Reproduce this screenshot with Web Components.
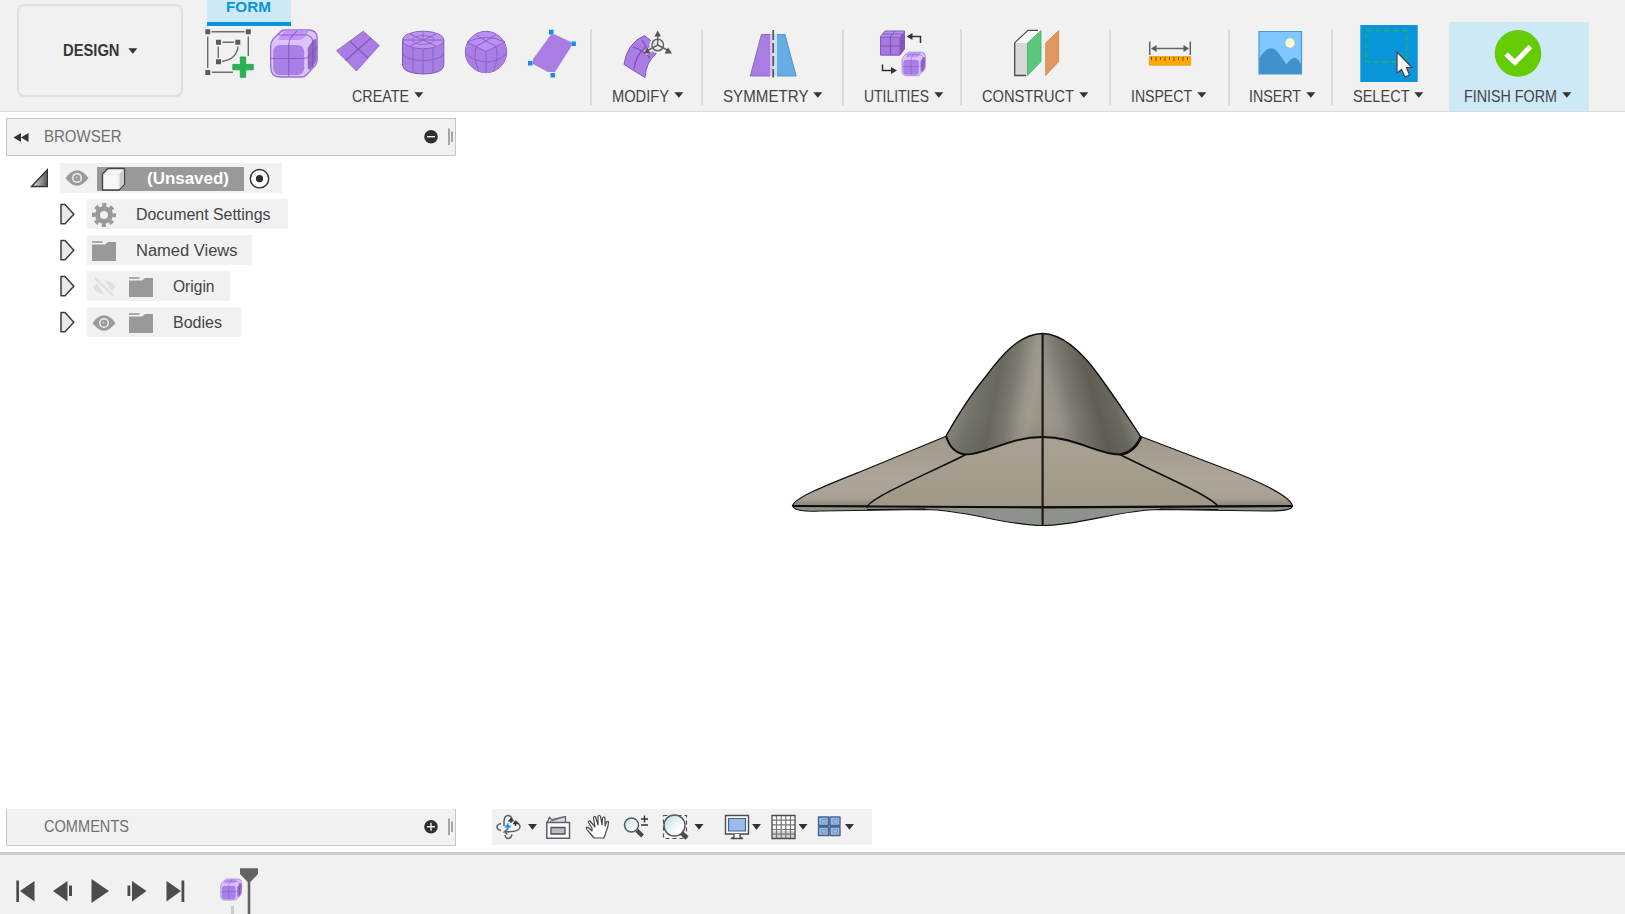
<!DOCTYPE html>
<html lang="en">
<head>
<meta charset="utf-8">
<title>Form design workspace</title>
<style>
html,body{margin:0;height:100%;overflow:hidden;background:#fff;font-family:"Liberation Sans",Arial,sans-serif}
</style>
</head>
<body>
<form-workspace></form-workspace>
<script>
const define = (name, css, html) => customElements.define(name, class extends HTMLElement {
  constructor() {
    super();
    this.attachShadow({mode: "open"});
  }
  connectedCallback() {
    const t = document.createElement("template");
    t.innerHTML = `<style>*{box-sizing:border-box}svg{display:block;flex:none}${css}</style>` + (typeof html === "function" ? html(this) : html);
    this.shadowRoot.replaceChildren(t.content.cloneNode(true));
  }
});

/* One line of text, set to a given width. */
define("fit-text", `:host{display:block;flex:none}text{fill:currentColor;font-family:"Liberation Sans",Arial,sans-serif}`, el => {
  const w = el.getAttribute("w"), s = el.getAttribute("size") || 16.5, b = el.getAttribute("weight") || 400;
  return `<svg width="${w}" height="20" overflow="visible"><text x="0" y="15" font-size="${s}" font-weight="${b}" textLength="${w}" lengthAdjust="spacingAndGlyphs">${el.getAttribute("text")}</text></svg>`;
});

define("drop-arrow", `:host{display:block;flex:none}`, `<svg width="10" height="6"><path d="M.3.2h9L4.8 5.8z" fill="#333"/></svg>`);

/* Toolbar group: drawing above, label and arrow below. */
define("tool-group", `
:host{display:flex;flex-direction:column;flex:none;height:111px;padding-top:22px;position:relative;color:#444}
:host([active]){background:linear-gradient(#cde9f5,#cde9f5) 0 22px/100% 89px no-repeat}
:host([sep]){background:linear-gradient(#dadada,#dadada) right 29px/2px 76px no-repeat}
.label{display:flex;align-items:center;gap:5px;height:20px;margin-top:3px;margin-left:-.7px}
drop-arrow{margin-top:-4px}`,
el => {
  const x = +el.getAttribute("x"), w = +el.getAttribute("w"), lx = +el.getAttribute("lx");
  return `<style>:host{width:${w}px}.label{padding-left:${lx - x}px}</style>
  <svg width="${w}" height="62" viewBox="${x} 22 ${w} 62">${ICONS[el.getAttribute("icon")]}</svg>
  <div class="label"><fit-text w="${el.getAttribute("lw")}" text="${el.getAttribute("label")}"></fit-text><drop-arrow></drop-arrow></div>`;
});

const roundedBox = `<path d="M1.500 17Q1.500 13 4 10L10 4Q12.500 1 16 1H40Q48 1.500 48 9V31Q48 34 45.500 37L38 45Q35.500 48 32 48H11Q1.500 48 1.500 38Z" fill="#dcc4fa" stroke="#9970cc" stroke-width="1.300"/>
<path d="M9.500 9L14 3.500Q16 1.600 19 1.600H38Q40 2 38.500 4L35 8.500Q33 11 29 11H12Q8 11 9.500 9Z" fill="#c096fa"/>
<path d="M38.500 19L44 11Q47.400 8 47.400 13V30Q47 33 45 35.500L41.500 40Q38.500 42 38.500 37Z" fill="#9266cb"/>
<rect x="4" y="16" width="31" height="30" rx="6.500" fill="#a97fe8"/>
<path d="M19.500 47.500V17Q19.500 11 23 7L28 1.500M2 29.500H34Q38 29.500 40 27L48 18M9 6H37Q43.500 7 43.500 13V38" fill="none" stroke="#7d50b3" stroke-opacity=".75" stroke-width="1.100"/>`;

const ICONS = {
create: `
<g fill="none" stroke="#6c6c6c" stroke-width="1.400"><path d="M211.500 31.700H244.500M207.700 36.500V68M212 72.300H233M248.300 36.500V56M222.500 42.300H234M218.300 46.500V58M222 61.500Q237 59 238 46.500"/></g>
<g fill="#5b5b5b"><path d="M205.300 29.300h5v5h-5zM245.800 29.300h5v5h-5zM205.300 70h5v5h-5zM216 39.700h5v5h-5zM235.300 39.700h5v5h-5zM216 59.300h5v5h-5z"/></g>
<path d="M240.300 56.900h5.400v7.500h7.600v5.400h-7.600v7.500h-5.400v-7.500h-7.500v-5.400h7.500z" fill="#2bb255" stroke="#1fa049" stroke-width=".8"/>
<g transform="translate(269.200 29)">${roundedBox}</g>
<path d="M336.500 50.700L363.300 31.200L379.300 45.500L356.500 71Z" fill="#a97de4" stroke="#8a5fbf" stroke-width=".8"/>
<path d="M345.500 60.500L371 38M350 41.500L368 58" stroke="#8458b9" stroke-width="1.200"/>
<path d="M402.500 40V65Q403 73.500 423.500 74Q443.500 73.500 443.800 65V40Z" fill="#a77ee2" stroke="#8359b7"/>
<ellipse cx="423.200" cy="40" rx="20.600" ry="8.800" fill="#bc92f5" stroke="#8d63c2"/>
<ellipse cx="423.200" cy="40" rx="11" ry="4.500" fill="none" stroke="#8d63c2" stroke-width=".8"/>
<path d="M402.500 53Q404 60 423.500 60.500Q442 60 443.800 53M413 48V73M423 49V74M433 48V73M423 31V40M403 40H443M410 34L436 46M436 34L410 46" fill="none" stroke="#845ab8" stroke-width=".8"/>
<circle cx="486" cy="52" r="20.700" fill="#b98ff5" stroke="#9065c5" stroke-width="1"/>
<path d="M486 51.500L467 42Q463 60 474 69Q486 77 498 69Q509 60 505 42Z" fill="#a97fe5"/>
<path d="M486 51.500L467 42M486 51.500L505 42M486 51.500V72.500M467 42Q486 33 505 42M476 35L496 46.500M496 35L476 46.500M476 46.500Q473 60 479 72M496 46.500Q499 60 493 72M466 54Q476 62 486 62Q497 62 506 54" fill="none" stroke="#875dbc" stroke-width=".9"/>
<path d="M551 34.500H555L571 42V47L555 72H548L533 64V59Z" fill="#a97de4"/>
<g fill="#168deb"><path d="M549 29.800h4.600v4.600H549zM571.300 41.500h4.600v4.600h-4.600zM528 61h4.600v4.600H528zM550.500 73h4.600v4.600h-4.600z"/></g>`,
modify: `
<path d="M624 64.500Q627 43 644.500 35.500L656 45V54Q646 62 645 77.500Z" fill="#a97de4" stroke="#8055b4"/>
<path d="M633 47Q643 50 650 58M642 40L646 47Q636 54 634 69" fill="none" stroke="#7b50ae" stroke-width="1.200"/>
<g stroke="#f1f1f1" stroke-width="4.500" fill="none"><path d="M657.700 35V45L645 53M657.700 45L670 52"/><circle cx="657.700" cy="45" r="6"/></g>
<g stroke="#646464" stroke-width="1.500" fill="none"><path d="M657.700 34V45L646 51.500M657.700 45L670 51.500"/><circle cx="657.700" cy="45" r="5.800"/></g>
<path d="M657.700 30.500L661 36.500H654.500ZM643.500 53.500L650.500 53.500L647.500 47.500ZM672 53.500L664.500 53.500L668 47.500Z" fill="#555"/>`,
symmetry: `
<path d="M761.500 34H770.500V76H750.300Z" fill="#a97de4"/><path d="M770 76H750.300L761.500 34.500H770" fill="none" stroke="#9268c6"/>
<path d="M777 34H785L796.500 76H777Z" fill="#67ade3"/><path d="M777 76H796L785 34.500H777" fill="none" stroke="#5698ce"/>
<path d="M770.500 34h3v42h-3z" fill="#dccbed"/><path d="M773.500 34h3.500v42h-3.500z" fill="#cbdff0"/><path d="M773.200 30V77.500" stroke="#5b5b5b" stroke-width="1.800" stroke-dasharray="10 3"/>`,
utilities: `
<path d="M880.500 36.500L885 31H904.500V49L900 55H880.500Z" fill="#ba91f0" stroke="#8359b8"/>
<path d="M880.500 37H900V55H880.500Z" fill="#a778e4" stroke="#8056b4" stroke-width=".8"/><path d="M900 37L904.500 31V49L900 55Z" fill="#865bba"/>
<path d="M890.500 37V55M880.500 46H900L904.500 40M890.500 37L895 31M882.500 34H902V52" fill="none" stroke="#7b50ae" stroke-width=".9"/>
<g transform="translate(901.300 51.700) scale(.5)">${roundedBox}</g>
<path d="M911 36.500H920.500V43M882.500 64.500V70.500H891" fill="none" stroke="#333" stroke-width="1.500"/><path d="M906.700 36.500L912.500 33V40ZM897 70.500L891 67V74Z" fill="#333"/>`,
construct: `
<path d="M1014.500 43L1028 30H1041L1027.500 43Z" fill="#fff"/><path d="M1015 43H1027V76H1015Z" fill="#d8d8d8"/>
<path d="M1038 30.300H1028L1014.700 43V75.500H1026" fill="none" stroke="#4b4b4b" stroke-width="1.300"/>
<path d="M1015.500 43H1027L1040 30.900H1028.500Z" fill="#fafafa"/>
<path d="M1027.500 43L1041 30.500V61.500L1027.500 75.500Z" fill="#5bc77d" stroke="#41ae64" stroke-width=".8"/>
<path d="M1045.700 43L1058.700 30.500V61.500L1045.700 75.500Z" fill="#e29761" stroke="#cf8149" stroke-width=".8"/>`,
inspect: `
<path d="M1149.700 41.500V55M1190.300 41.500V55M1154 48.500H1186" stroke="#666" stroke-width="1.500"/><path d="M1151 48.500L1156.500 45V52ZM1189 48.500L1183.500 45V52Z" fill="#5b5b5b"/>
<path d="M1149.300 56.500H1190.700V65.300H1149.300Z" fill="#ffa800" stroke="#e99900" stroke-width=".7"/>
<path d="M1151.500 57V60M1156 57V61M1160.500 57V60M1165 57V61M1169.500 57V60M1174 57V61M1178.500 57V60M1183 57V61M1187.500 57V60" stroke="#76530b" stroke-width="1"/>`,
insert: `
<path d="M1259 31.500H1301.500V74H1259Z" fill="#81c7ff"/><circle cx="1290" cy="43" r="4.700" fill="#fffccb"/>
<path d="M1259 59C1266 47 1273 45 1278.500 53L1286.500 64.500Q1294 53 1299 61L1301.500 65V74H1259Z" fill="#4092cc"/>
<path d="M1259 31.500H1301.500V74H1259Z" fill="none" stroke="#479bd3" stroke-width="1.200"/>`,
select: `
<path d="M1360.300 25H1417.700V82H1360.300Z" fill="#0895da"/>
<path d="M1366 30.500H1406.500V62H1366Z" fill="none" stroke="#24b064" stroke-width="1.500" stroke-dasharray="6 3"/>
<path d="M1397 52V73L1401.500 69.500L1405 77L1409.500 75L1406.500 67.500H1412Z" fill="#f6f6f6" stroke="#444" stroke-width="1.200"/>`,
finish: `
<circle cx="1518" cy="53.400" r="23.300" fill="#65cc03"/><path d="M1506 54L1515 62.500L1530.500 46.500" fill="none" stroke="#fff" stroke-width="5"/>`
};

define("design-button", `
:host{display:block;flex:none;width:205px;padding:4px 0 0 17px}
div{width:165.500px;height:93px;border:2px solid #dedede;border-radius:7px;display:flex;align-items:center;padding-left:44px;gap:8px;color:#373737}
fit-text{margin-top:1px}drop-arrow{margin-top:0}`,
`<div><fit-text w="56.500" weight="700" size="16" text="DESIGN"></fit-text><drop-arrow></drop-arrow></div>`);

define("form-tab", `
:host{display:block;position:absolute;left:207px;top:0;width:83.500px;height:25.500px;background:#cde9f5;border-bottom:4.500px solid #0895da;color:#0895da;padding-left:18.500px}
fit-text{margin-top:-3.500px}`, `<fit-text w="45" weight="700" size="15.500" text="FORM"></fit-text>`);

define("tool-bar", `:host{display:flex;height:112px;background:#f1f1f1;border-bottom:1.500px solid #dcdcdc;position:relative}`, `
<design-button></design-button>
<tool-group sep icon="create" x="205" w="387" lx="353" lw="57" label="CREATE"></tool-group>
<tool-group sep icon="modify" x="592" w="111" lx="612.500" lw="57" label="MODIFY"></tool-group>
<tool-group sep icon="symmetry" x="703" w="141" lx="723.500" lw="85.500" label="SYMMETRY"></tool-group>
<tool-group sep icon="utilities" x="844" w="118" lx="864.500" lw="65" label="UTILITIES"></tool-group>
<tool-group sep icon="construct" x="962" w="149" lx="983" lw="92" label="CONSTRUCT"></tool-group>
<tool-group sep icon="inspect" x="1111" w="119" lx="1131.500" lw="61" label="INSPECT"></tool-group>
<tool-group sep icon="insert" x="1230" w="103" lx="1250" lw="52" label="INSERT"></tool-group>
<tool-group icon="select" x="1333" w="116" lx="1353.500" lw="56.500" label="SELECT"></tool-group>
<tool-group active icon="finish" x="1449" w="139.500" lx="1464.500" lw="93" label="FINISH FORM"></tool-group>
<form-tab></form-tab>`);

define("panel-bar", `
:host{display:flex;align-items:center;width:450px;height:37.500px;background:#f1f1f1;border:1.500px solid #c6c6c6;color:#707070}
:host([open-top]){border-top:0}
.lead{width:37px}.grow{flex:1}`, el => `
<svg class="lead" width="37" height="20"><path d="${el.hasAttribute("open-top") ? "" : "M6.500 10.500L14 6V15ZM14 10.500L21.500 6V15Z"}" fill="#333"/></svg>
<fit-text w="${el.getAttribute("tw")}" text="${el.getAttribute("text")}"></fit-text><span class="grow"></span>
<svg width="31" height="22"><circle cx="7" cy="10.700" r="6.800" fill="#2f2f2f"/><path d="${el.hasAttribute("open-top") ? "M3 10.700H11M7 6.700V14.700" : "M3 10.700H11"}" stroke="#eee" stroke-width="1.400"/><path d="M25 2.500V19M28 5.500V16" stroke="#858585" stroke-width="1.400"/></svg>`);

const EYE = `<path d="M.5 10Q12 -5.500 23.500 10Q12 25.500 .5 10Z" fill="#9b9b9b"/><circle cx="12" cy="10" r="5" fill="#eee"/><circle cx="12" cy="10" r="3.500" fill="#9b9b9b"/><circle cx="11.500" cy="9.500" r="1" fill="#ccc"/>`;
const GLYPHS = {
eye: EYE,
hidden: `<path d="M1 10L5 6L12 17Q4 17 1 10ZM12 3Q20 4 23.500 10L20 14Z" fill="#dfdfdf"/><circle cx="12.500" cy="10" r="4" fill="#f1f1f1"/><path d="M3 1L21 19" stroke="#f1f1f1" stroke-width="5"/><path d="M3 1L21.500 19" stroke="#dfdfdf" stroke-width="2.300"/>`,
folder: `<path d="M0 3.500H13L16 1H24V20H0Z" fill="#999"/><path d="M0 0H10.500V2H0Z" fill="#aaa"/>`,
gear: `<circle cx="12" cy="10" r="6.500" fill="none" stroke="#999" stroke-width="5"/><circle cx="12" cy="10" r="10.200" fill="none" stroke="#999" stroke-width="3.500" stroke-dasharray="4.200 3.811" stroke-dashoffset="2.100"/>`
};

/* Row of the model tree: arrow, one or two glyphs, a caption. */
define("tree-row", `
:host{display:flex;align-items:center;height:30px;padding-left:54px;color:#444}
.cell{display:flex;align-items:center;height:30px;background:#f1f1f1;margin-left:12px;padding-left:4.500px}
.cell svg{position:relative;top:.5px}
.cell svg + svg{margin-left:13.200px}fit-text{margin-left:20.700px;margin-top:2px}`, el => {
  const g = el.getAttribute("glyphs").split(" ");
  return `<style>.cell{width:${el.getAttribute("w")}px}</style><svg width="15" height="22"><path d="M1 1.500H5L13.800 11.300L5 20.800H1Z" fill="#e9e9ed" stroke="#3d3d3d" stroke-width="1.500" stroke-linejoin="round"/></svg>
  <div class="cell">${g.map(n => `<svg width="24" height="20" overflow="visible">${GLYPHS[n]}</svg>`).join("")}<fit-text w="${el.getAttribute("tw")}" size="16" text="${el.getAttribute("text")}"></fit-text></div>`;
});

define("tree-root", `
:host{display:flex;align-items:center;height:30px;padding-left:24px}
.cell{display:flex;align-items:center;width:222px;height:30px;background:#f1f1f1;margin-left:12px;padding-left:4.500px}
.name{display:flex;align-items:center;width:147px;height:24px;background:#999;margin:1px 5px 0 8.500px;padding-left:4px;color:#fff}
fit-text{margin-left:21px;margin-top:1px}`, `
<svg width="18" height="20"><defs><linearGradient id="g"><stop stop-color="#eee"/><stop offset="1" stop-color="#555"/></linearGradient></defs><path d="M1.500 18.500L17.500 1.500V18.500Z" fill="url(#g)" stroke="#333" stroke-width="1.300"/></svg>
<div class="cell"><svg width="24" height="20">${EYE}</svg>
<div class="name"><svg width="25" height="24"><path d="M1.500 7L7 1.500H23.500V17L18 23H1.500Z" fill="#f7f7f8" stroke="#444" stroke-width="1.400" stroke-linejoin="round"/><path d="M18.500 7L23 2V17L18.500 22Z" fill="#c9cbd0"/><path d="M2.500 7.500H18V22" fill="none" stroke="#e3e4e8"/></svg><fit-text w="82" weight="700" size="16" text="(Unsaved)"></fit-text></div>
<svg width="21" height="22"><circle cx="10.500" cy="11.700" r="9.200" fill="#fafafa" stroke="#333" stroke-width="1.400"/><circle cx="10.500" cy="11.700" r="3.600" fill="#2d2d2d"/></svg></div>`);

define("side-panels", `
:host{display:flex;flex-direction:column;justify-content:space-between;width:456px;padding:6px 0 6px 6px}
.tree{display:flex;flex-direction:column;gap:6px;margin-top:7.500px}`, `
<div><panel-bar text="BROWSER" tw="77.500"></panel-bar>
<div class="tree"><tree-root></tree-root>
<tree-row glyphs="gear" text="Document Settings" w="201" tw="134.500"></tree-row>
<tree-row glyphs="folder" text="Named Views" w="165" tw="101.500"></tree-row>
<tree-row glyphs="hidden folder" text="Origin" w="142.500" tw="41.500"></tree-row>
<tree-row glyphs="eye folder" text="Bodies" w="154" tw="49"></tree-row></div></div>
<panel-bar open-top text="COMMENTS" tw="85"></panel-bar>`);

define("model-view", `:host{display:block}`, `
<svg width="1169" height="697" viewBox="456 112 1169 697">
<defs>
<linearGradient id="dl" gradientUnits="userSpaceOnUse" x1="962" y1="386" x2="1042" y2="402"><stop stop-color="#87847a"/><stop offset=".15" stop-color="#77746a"/><stop offset=".42" stop-color="#6a675c"/><stop offset=".62" stop-color="#7d7a70"/><stop offset=".78" stop-color="#999488"/><stop offset=".88" stop-color="#a19b8e"/><stop offset="1" stop-color="#9b9386"/></linearGradient>
<linearGradient id="dr" gradientUnits="userSpaceOnUse" x1="1042" y1="396" x2="1122" y2="374"><stop stop-color="#a0998b"/><stop offset=".14" stop-color="#959187"/><stop offset=".32" stop-color="#7c796f"/><stop offset=".6" stop-color="#615d53"/><stop offset=".82" stop-color="#6b685e"/><stop offset="1" stop-color="#88857b"/></linearGradient>
<linearGradient id="wg" x1="0" y1="0" x2="0" y2="1"><stop stop-color="#a09889"/><stop offset=".6" stop-color="#ada698"/><stop offset=".88" stop-color="#a9a294"/><stop offset="1" stop-color="#8a8478"/></linearGradient>
<linearGradient id="mg" x1="0" y1="0" x2="0" y2="1"><stop stop-color="#a9a294"/><stop offset="1" stop-color="#a09786"/></linearGradient>
<linearGradient id="sh" x1="0" y1="0" x2="0" y2="1"><stop offset=".7" stop-color="#555" stop-opacity="0"/><stop offset="1" stop-color="#555" stop-opacity=".25"/></linearGradient>
</defs>
<path d="M792.500 505.500Q794 512.500 820 511L925 509.500C968 510 1005 525.500 1042.500 525.500C1080 525.500 1118 510 1160 509.500L1265 511Q1293 511.500 1292.500 505.500Z" fill="#8e928c" stroke="#111" stroke-width="1.100"/>
<path d="M946 436.300L867 469C832 483 793.500 497.500 792.500 506L1292.500 506C1291 496.500 1258 480.500 1222 467.500L1141 436.500Z" fill="url(#wg)" stroke="#111" stroke-width="1.200"/>
<path d="M867 506Q870 500 965 455L1042 437L1121 455Q1213 499 1218 506Z" fill="url(#mg)"/>
<path id="left" d="M946 436C962 408 972 393 985 377.500C1003 353 1020 334 1042.500 333.500V437C1008 437 986 455 965 454.500C955 453 949 446 946 436Z" fill="url(#dl)"/>
<path id="right" d="M1141 437C1124 411 1116 399 1100 377C1083 353 1063 334 1042.500 333.500V437C1076 437 1098 455 1120 454.500C1131 453 1137 446 1141 437Z" fill="url(#dr)"/>
<use href="#left" style="display:none"/>
<path d="M946 436L1042.500 333.500L1141 437C1137 446 1131 453 1120 454.500C1098 455 1076 437 1042.500 437C1008 437 986 455 965 454.500C955 453 949 446 946 436Z" fill="url(#sh)"/>
<g fill="none" stroke="#0d0d0b">
<path d="M946 436C962 408 972 393 985 377.500C1003 353 1020 334 1042.500 333.500C1063 334 1083 353 1100 377C1116 399 1124 411 1141 437" stroke-width="1.300"/>
<path d="M946 436C949 446 955 453 965 454.500C986 455 1008 437 1042.500 437C1076 437 1098 455 1120 454.500C1131 453 1137 446 1141 437" stroke-width="2"/>
<path d="M1120 454.500C1131 453 1137 446 1141 437" stroke-width="2.700"/>
<path d="M965 455C925 475 869 498 867 507.500M1121 455C1160 475 1212 496 1218.500 507" stroke-width="1.500"/>
<path d="M792.500 506L1042 507.400L1292.500 506" stroke-width="2.200"/>
<path d="M867 509.500L925 509M1218 509.500L1160 509" stroke-width="1"/>
<path d="M1042.600 333.500V525.500" stroke="#1c1a17" stroke-width="2.200"/></g>
</svg>`);

define("view-tools", `:host{display:flex;width:380px;height:36px;margin-left:36px;background:#f1f1f1}`, `
<svg width="380" height="36" viewBox="492 809 380 36"><defs><linearGradient id="lens" x1="0" y1="0" x2="1" y2="1"><stop stop-color="#b9dcdc"/><stop offset=".7" stop-color="#fff"/></linearGradient></defs>
<g fill="none" stroke="#5c6068" stroke-width="1.500">
<path d="M501 823.500Q497 824.500 497 827Q497 829.500 501 830.500M504 826V821Q504.500 815.500 508 815.500Q511 815.500 512.500 820M514.500 821Q520 823.500 520 827Q519.500 831.500 509 831.700H504.500L507.500 829M504.500 831.700L507.500 834.500M505 835Q505.500 838.500 508 838.500Q511 838.500 512 834.500"/></g>
<path d="M508.500 821.500L511 817.500L513.500 821.500ZM513 824L515.500 820.500L518.500 824Z" fill="#34373d"/><path d="M511 818V823M508.500 820.500H513.500M515.500 821V826M513 823.500H518" stroke="#34373d" stroke-width="1.300"/><path d="M507.700 823.500V829.500M504.700 826.500H510.700" stroke="#168deb" stroke-width="1.800"/>
<g fill="#333"><path d="M528 824H537L532.500 829.700ZM694.500 824H703.500L699 829.700ZM752 824H761L756.500 829.700ZM798.500 824H807.500L803 829.700ZM845 824H854L849.500 829.700Z"/></g>
<path d="M547 823L549.500 817L551.500 819.500L565.500 816.500V823Z" fill="#d9dade" stroke="#5c6068" stroke-width="1.200" stroke-linejoin="round"/><path d="M550 821.500L565 816.500" stroke="#5c6068"/>
<path d="M546.800 822.500H569.500V838.300H546.800Z" fill="#fff" stroke="#5c6068" stroke-width="1.500"/><path d="M551 827.500H565V834H551Z" fill="#babdc5" stroke="#4b4f58" stroke-width="1.300"/>
<path d="M592 831Q587 826 586.500 827.500Q585.500 828.500 589 832L594 838H604L606 832Q608.500 826 608.500 822Q608 820.500 606.500 822L605 826L605 818Q604 815.500 602.500 818L602 825L600.500 816.500Q599 814 598 816.500L598 825L595.500 817Q594 815.500 593.500 818L595 827L590 821Q588 820.500 588.500 822.500L592 828Z" fill="#fff" stroke="#45484f" stroke-width="1.200" stroke-linejoin="round"/>
<circle cx="631.500" cy="825" r="7" fill="url(#lens)" stroke="#565a62" stroke-width="1.500"/><path d="M637 830.500L642.500 836" stroke="#44474e" stroke-width="4"/><path d="M644.500 815.500V822.500M641 819H648M641 825H648" stroke="#333" stroke-width="1.400"/>
<path d="M663.500 815.500H686.500V838.500H663.500Z" fill="none" stroke="#555" stroke-width="1.200" stroke-dasharray="4 3"/><circle cx="674.500" cy="825.500" r="10.500" fill="url(#lens)" stroke="#565a62" stroke-width="1.500"/><path d="M681.500 833L687 838" stroke="#4b4b4b" stroke-width="4.500"/>
<path d="M725.500 815.500H748.500V834H725.500Z" fill="#fff" stroke="#4b4b4b" stroke-width="1.400"/><path d="M728.500 818.500H745.500V831H728.500Z" fill="#9dbbe6" stroke="#3f639b" stroke-width="1.200"/><path d="M734 834V837L731 838.500H743L740 837V834" fill="#fff" stroke="#4b4b4b" stroke-width="1.300"/>
<path d="M772 815.500H795V838.500H772Z" fill="#fff"/><path d="M772 831H795V838.500H772Z" fill="#cfd3dc"/><path d="M776.500 816V838M781.200 816V838M785.800 816V838M790.500 816V838M772 820.200H795M772 824.800H795M772 829.500H795M772 834.200H795" stroke="#777" stroke-width="1.200"/><path d="M772 815.500H795V838.500H772Z" fill="none" stroke="#4b4b4b" stroke-width="1.300"/>
<path d="M818.500 817H828.500V825.500H818.500ZM830 817H840V825.500H830ZM818.500 827H828.500V835.500H818.500ZM830 827H840V835.500H830Z" fill="#9cb9e5" stroke="#47648f" stroke-width="1.400" stroke-linejoin="round"/><path d="M821.500 819.500H826V823H821.500ZM833 819.500H837.500V823H833ZM821.500 829.500H826V833H821.500ZM833 829.500H837.500V833H833Z" fill="none" stroke="#7396c8"/>
</svg>`);

define("time-line", `:host{display:block;height:62px;background:#f1f1f1;border-top:3px solid #cdcdcd}`, `
<svg width="300" height="59" viewBox="0 855 300 59">
<g fill="#4c4c4c"><path d="M16.300 880.500H19V902H16.300ZM20 891L34.500 881V901.500ZM53 891L67.500 881V901.500ZM69 885.500H72V896H69ZM91.500 879L109 891L91.500 903ZM127.500 885.500H130.300V896H127.500ZM132 881L146.500 891L132 901.500ZM166.500 881L181 891L166.500 901.500ZM181.500 880.500H184.300V902H181.500Z"/></g>
<g transform="translate(220 878.500) scale(.45)">${roundedBox}</g>
<path d="M231 906H234V914H231Z" fill="#ccc"/><path d="M240 868.300H258V874L250.300 882V914H247.700V882L240 874Z" fill="#636363"/></svg>`);

define("form-workspace", `:host{display:grid;grid-template-rows:112px 740px 62px;width:1625px;height:914px;overflow:hidden}
main{display:grid;grid-template-columns:456px 1169px}.canvas{display:flex;flex-direction:column;min-width:0}`, `
<tool-bar></tool-bar><main><side-panels></side-panels><div class="canvas"><model-view></model-view><view-tools></view-tools></div></main><time-line></time-line>`);
</script>
</body>
</html>
